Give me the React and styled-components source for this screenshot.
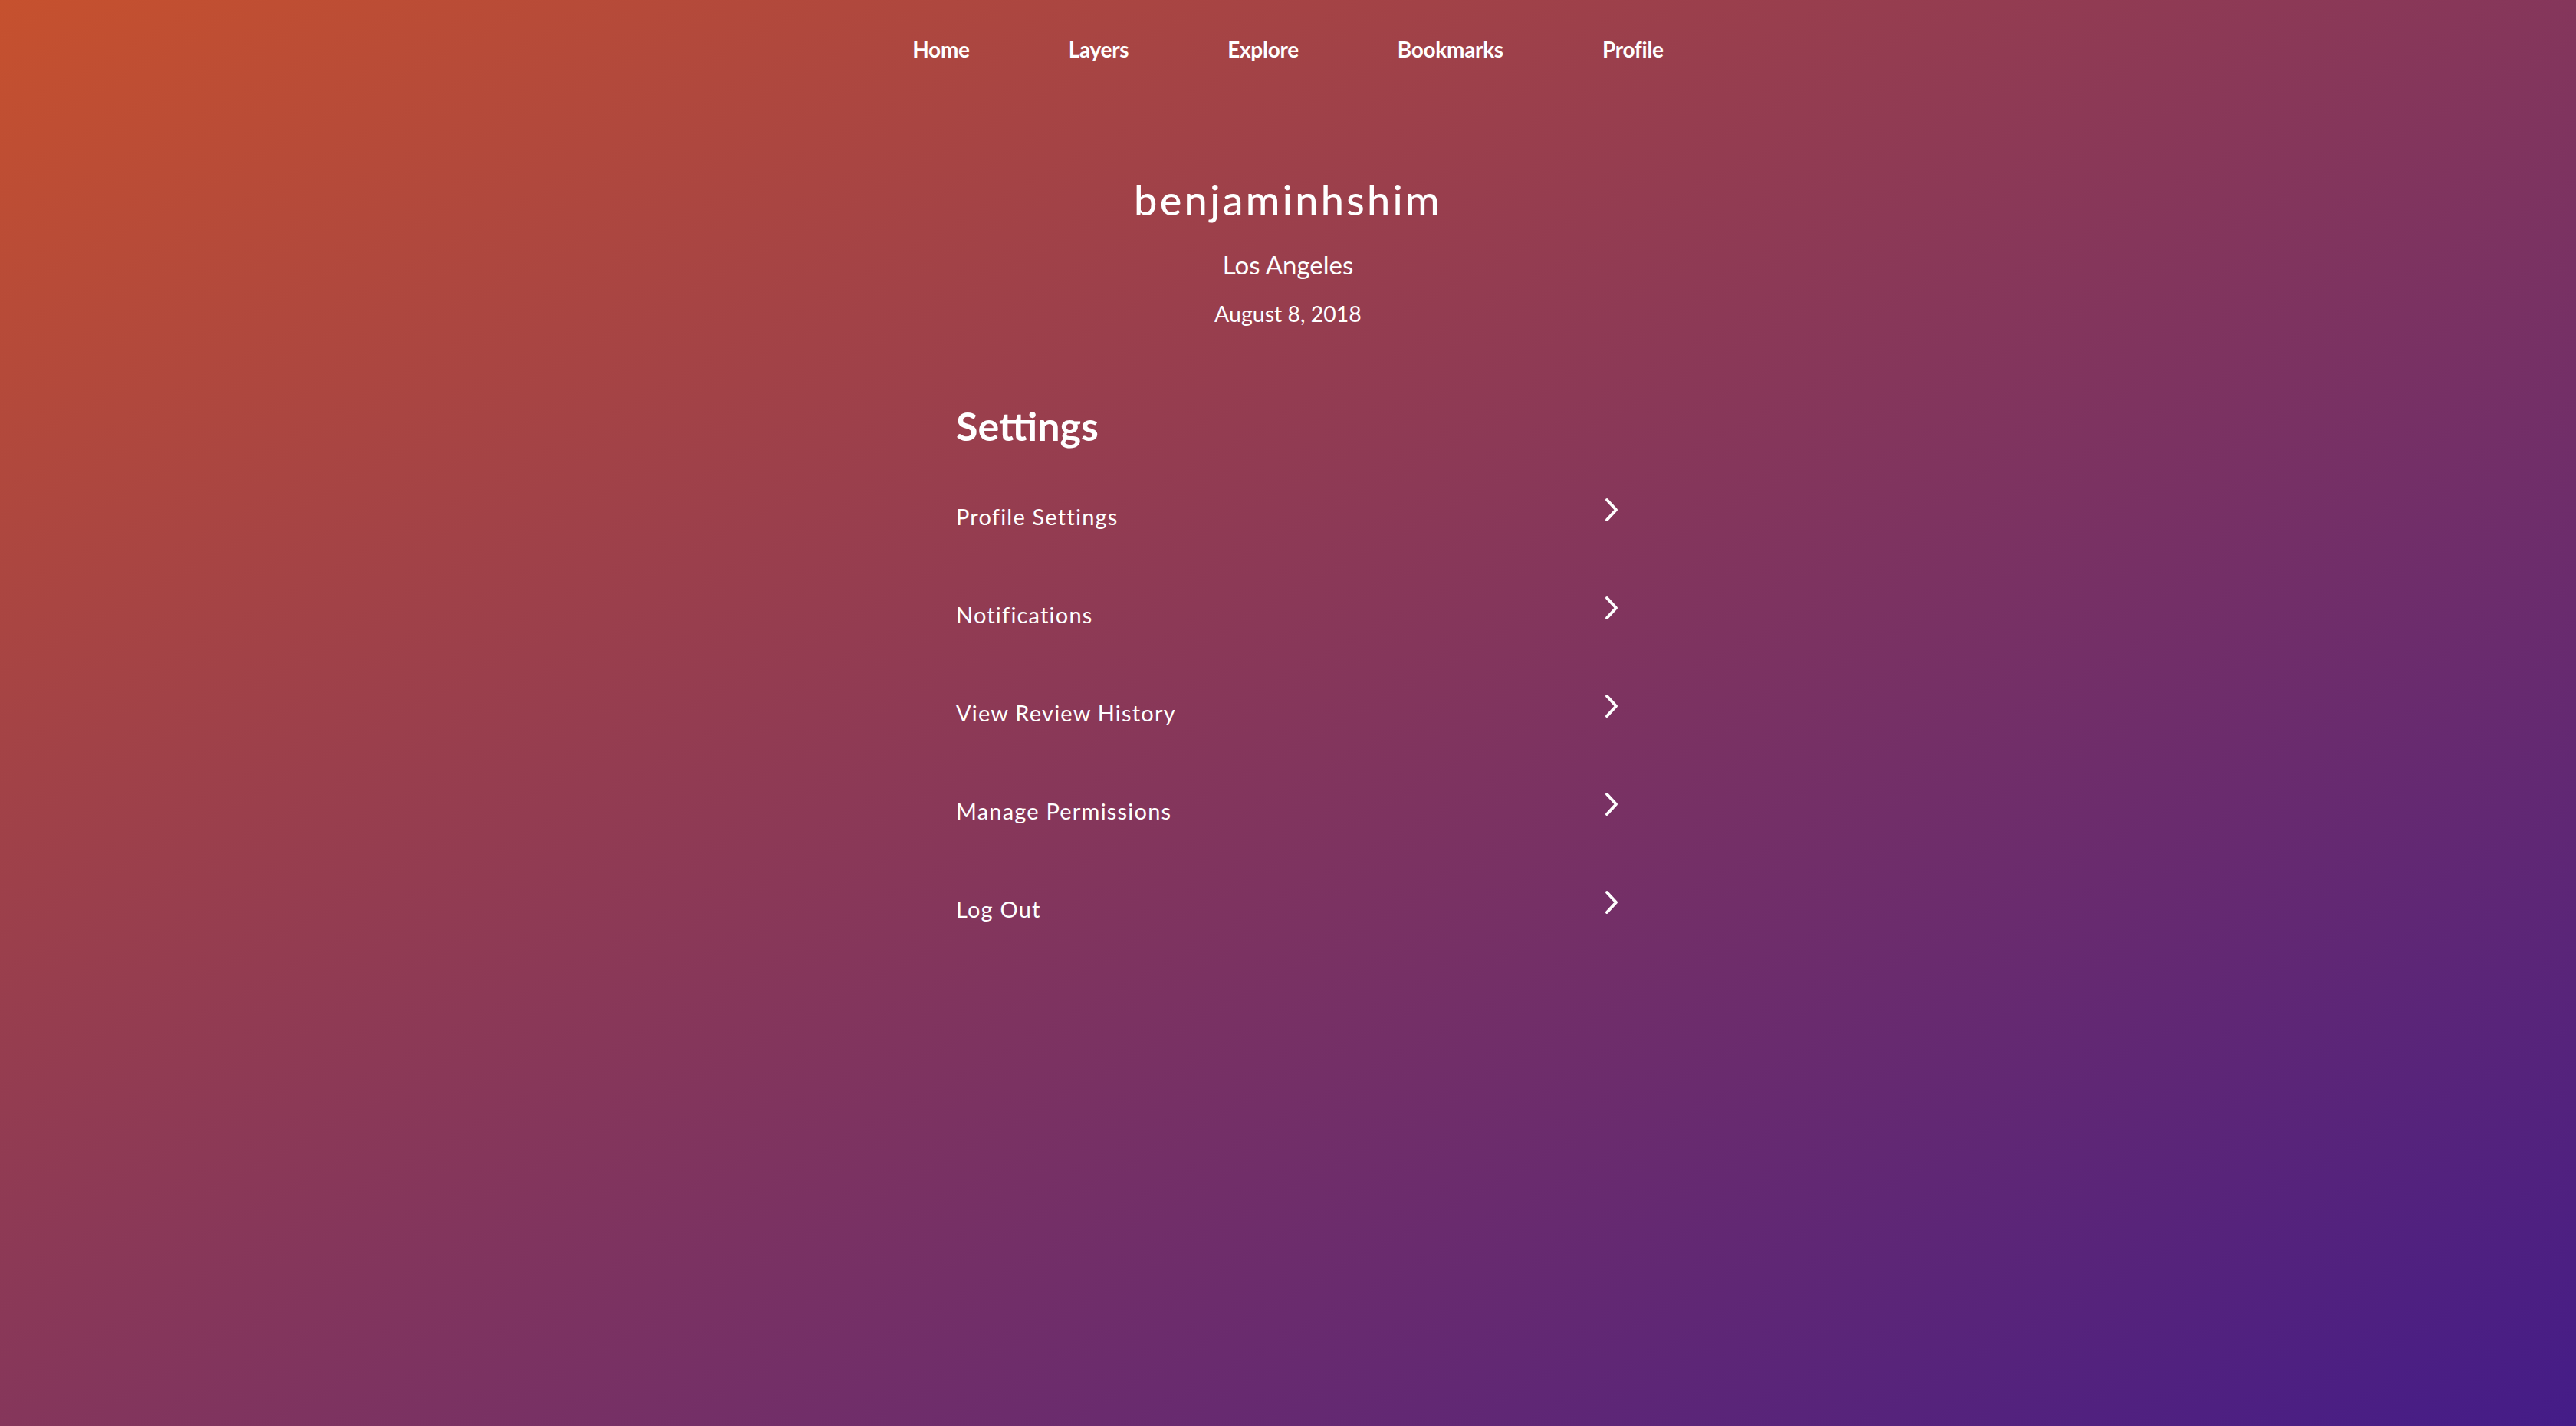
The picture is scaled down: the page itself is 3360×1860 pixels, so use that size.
import styled, { createGlobalStyle } from 'styled-components';

const GlobalStyle = createGlobalStyle`
    html, body {
        margin: 0;
        padding: 0;
        height: 100%;
    }
    body {
        font-family: Lato, "Open Sans", sans-serif;
        color: #fff;
    }
`;

const navItems = ['Home', 'Layers', 'Explore', 'Bookmarks', 'Profile'];
const settings = ['Profile Settings', 'Notifications', 'View Review History', 'Manage Permissions', 'Log Out'];

function Chevron() {
    return (
        <svg width="22" height="34" viewBox="0 0 22 34" fill="none">
            <polyline points="5,4 17,17 5,30" stroke="#fff" strokeWidth="4" strokeLinecap="round" strokeLinejoin="round" />
        </svg>
    );
}

export default function App() {
    return (
        <>
            <GlobalStyle />
            <Page>
                <Nav>
                    {navItems.map(item => <NavLink key={item}>{item}</NavLink>)}
                </Nav>
                <UserName>benjaminhshim</UserName>
                <City>Los Angeles</City>
                <Joined>August 8, 2018</Joined>
                <SettingsBox>
                    <Title>Settings</Title>
                    {settings.map(item => (
                        <Row key={item}>
                            <RowLabel>{item}</RowLabel>
                            <Arrow><Chevron /></Arrow>
                        </Row>
                    ))}
                </SettingsBox>
            </Page>
        </>
    );
}

const Page = styled.div`
    min-height: 100vh;
    display: flex;
    flex-direction: column;
    align-items: center;
    background: linear-gradient(to bottom right, #c6512e 0%, #85365b 50%, #441c88 100%);
`;

const Nav = styled.nav`
    height: 128px;
    display: flex;
    align-items: center;
    gap: 129px;
`;

const NavLink = styled.a`
    font-size: 28px;
    font-weight: 700;
    letter-spacing: -0.3px;
    cursor: pointer;
`;

const UserName = styled.h1`
    margin: 98px 0 0 0;
    font-size: 54px;
    line-height: 70px;
    font-weight: 500;
    letter-spacing: 3.3px;
`;

const City = styled.p`
    margin: 24px 0 0 0;
    font-size: 33px;
    line-height: 50px;
`;

const Joined = styled.p`
    margin: 19px 0 0 0;
    font-size: 28.5px;
    line-height: 40px;
`;

const SettingsBox = styled.section`
    width: 866px;
    margin-top: 91px;
    display: flex;
    flex-direction: column;
`;

const Title = styled.h2`
    margin: 0 0 19px 0;
    font-size: 52px;
    line-height: 70px;
    font-weight: 700;
`;

const Row = styled.div`
    height: 128px;
    display: flex;
    align-items: center;
    justify-content: space-between;
    cursor: pointer;
`;

const RowLabel = styled.span`
    font-size: 29px;
    letter-spacing: 1.2px;
`;

const Arrow = styled.span`
    display: flex;
    margin-bottom: 16px;
`;
